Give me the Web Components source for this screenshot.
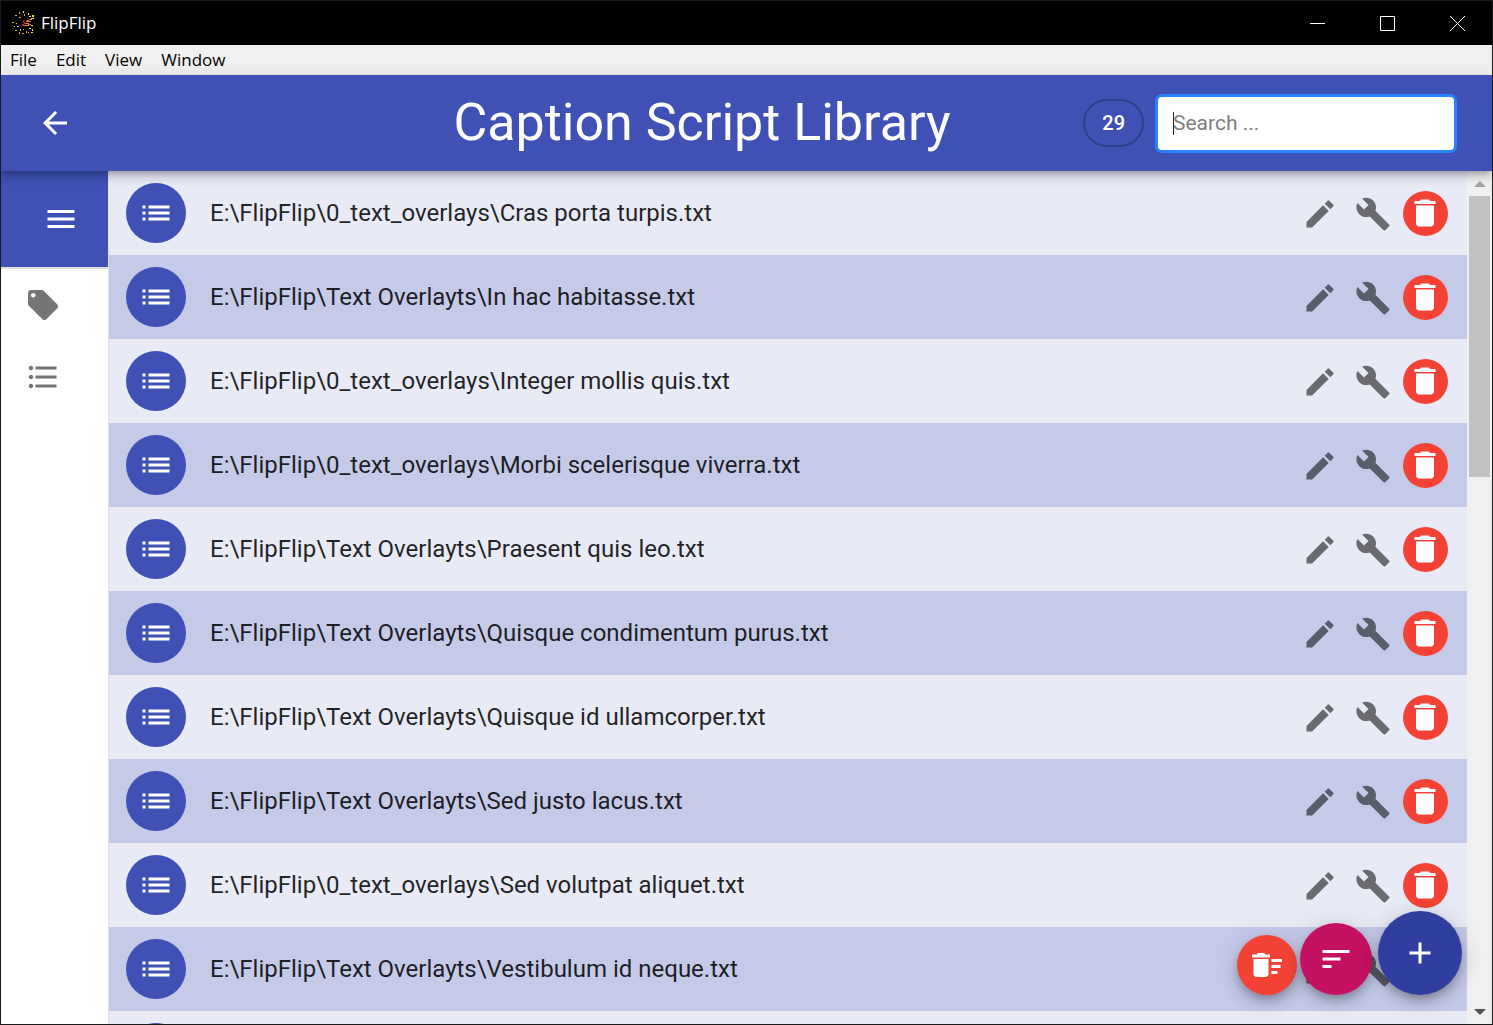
<!DOCTYPE html>
<html lang="en">
<head>
<meta charset="utf-8">
<title>FlipFlip</title>
<style>
html, body { margin: 0; height: 100%; }
body { font-family: Roboto, sans-serif; background: #fff; overflow: hidden; }
</style>
</head>
<body>
<flip-app></flip-app>
<script>
const ICONS = {
  back: 'M20 11H7.83l5.59-5.59L12 4l-8 8 8 8 1.41-1.41L7.83 13H20v-2z',
  menu: 'M3 18h18v-2H3v2zm0-5h18v-2H3v2zm0-7v2h18V6H3z',
  tag: 'M21.41 11.58l-9-9C12.05 2.22 11.55 2 11 2H4c-1.1 0-2 .9-2 2v7c0 .55.22 1.05.59 1.42l9 9c.36.36.86.58 1.41.58.55 0 1.05-.22 1.41-.59l7-7c.37-.36.59-.86.59-1.41 0-.55-.23-1.06-.59-1.42zM5.5 7C4.67 7 4 6.33 4 5.5S4.67 4 5.5 4 7 4.67 7 5.5 6.33 7 5.5 7z',
  bullets: 'M4 10.5c-.83 0-1.5.67-1.5 1.5s.67 1.5 1.5 1.5 1.5-.67 1.5-1.5-.67-1.5-1.5-1.5zm0-6c-.83 0-1.5.67-1.5 1.5S3.17 7.5 4 7.5 5.5 6.83 5.5 6 4.83 4.5 4 4.5zm0 12c-.83 0-1.5.68-1.5 1.5s.68 1.5 1.5 1.5 1.5-.68 1.5-1.5-.67-1.5-1.5-1.5zM7 19h14v-2H7v2zm0-6h14v-2H7v2zm0-8v2h14V5H7z',
  list: 'M3 13h2v-2H3v2zm0 4h2v-2H3v2zm0-8h2V7H3v2zm4 4h14v-2H7v2zm0 4h14v-2H7v2zM7 7v2h14V7H7z',
  edit: 'M3 17.25V21h3.75L17.81 9.94l-3.75-3.75L3 17.25zM20.71 7.04c.39-.39.39-1.02 0-1.41l-2.34-2.34c-.39-.39-1.02-.39-1.41 0l-1.83 1.83 3.75 3.75 1.83-1.83z',
  build: 'M22.7 19l-9.1-9.1c.9-2.3.4-5-1.5-6.9-2-2-5-2.4-7.4-1.3L9 6 6 9 1.6 4.7C.4 7.1.9 10.1 2.9 12.1c1.9 1.9 4.6 2.4 6.9 1.5l9.1 9.1c.4.4 1 .4 1.4 0l2.3-2.3c.5-.4.5-1.1.1-1.4z',
  trash: 'M6 19c0 1.1.9 2 2 2h8c1.1 0 2-.9 2-2V7H6v12zM19 4h-3.5l-1-1h-5l-1 1H5v2h14V4z',
  sweep: 'M15 16h4v2h-4zm0-8h7v2h-7zm0 4h6v2h-6zM3 18c0 1.1.9 2 2 2h6c1.1 0 2-.9 2-2V8H3v10zM14 5h-3l-1-1H6L5 5H2v2h12z',
  sort: 'M3 18h6v-2H3v2zM3 6v2h18V6H3zm0 7h12v-2H3v2z',
  add: 'M19 13h-6v6h-2v-6H5v-2h6V5h2v6h6v2z'
};

class Base extends HTMLElement {
  constructor() {
    super();
    this.attachShadow({ mode: 'open' });
  }
  connectedCallback() {
    this.shadowRoot.innerHTML = '<style>*{box-sizing:border-box}button{font:inherit;border:0;padding:0;margin:0;background:none;color:inherit;cursor:pointer;display:flex;align-items:center;justify-content:center}' + this.css() + '</style>' + this.html();
  }
}

class MdIcon extends Base {
  css() { return ':host{display:block;width:36px;height:36px;flex:none}svg{display:block;width:100%;height:100%;fill:currentColor}'; }
  html() { return `<svg viewBox="0 0 24 24" aria-hidden="true"><path d="${ICONS[this.getAttribute('name')]}"/></svg>`; }
}
customElements.define('md-icon', MdIcon);

class TitleBar extends Base {
  css() { return `
    :host{display:flex;align-items:center;height:44px;background:#000;color:#fff;font:17px/24px "Open Sans","Noto Sans",sans-serif;padding-left:10px}
    .logo{width:24px;height:24px;flex:none}
    .name{flex:1;padding-left:6px}
    .controls{display:flex;gap:1px}
    .controls button{width:69px;height:44px}
    .controls svg{width:15px;height:15px;display:block;fill:none;stroke:#fff}`; }
  html() { return `
    <svg class="logo" viewBox="0 0 24 24" aria-hidden="true" shape-rendering="crispEdges">
      <path fill="#f2e21c" d="M12 0h1v2h-1zM17 2h1v2h-1zM21 4h2v2h-2zM18 5h2v1h-2zM20 7h3v1h-3zM20 14h2v1h-2zM18 17h2v1h-2zM21 18h1v2h-1zM20 21h2v1h-2zM17 21h1v1h-1z"/>
      <path fill="#f0a82a" d="M8 1h1v2H8zM13 3h1v2h-1zM4 4h2v1H4zM8 6h2v1H8zM1 11h2v1H1zM5 12h1v1H5zM3 15h1v1H3zM6 15h2v1H6zM4 19h2v1H4zM9 18h1v2H9zM8 21h1v2H8zM12 18h1v1h-1zM11 22h2v1h-2zM15 20h1v2h-1z"/>
      <path fill="#e87a30" d="M18 8h3v1h-3zM16 9h2v1h-2zM15 10h5v1h-5zM14 12h4v1h-4zM17 13h3v1h-3zM13 14h5v1h-5z"/>
      <path fill="#d81408" d="M12 9h1v3h-1zM13 11h1v2h-1zM11 13h2v2h-2z"/>
    </svg>
    <span class="name">FlipFlip</span>
    <div class="controls">
      <button aria-label="Minimize"><svg viewBox="0 0 15 15"><path d="M0 7.5h15"/></svg></button>
      <button aria-label="Maximize"><svg viewBox="0 0 15 15"><path d="M.5 .5h14v14H.5z"/></svg></button>
      <button aria-label="Close"><svg viewBox="0 0 15 15"><path d="M0 0l15 15M15 0L0 15"/></svg></button>
    </div>`; }
}
customElements.define('title-bar', TitleBar);

class MenuBar extends Base {
  css() { return `
    :host{display:block;background:#f0f0f0;color:#000;font:17px/24px "Open Sans","Noto Sans",sans-serif}
    nav{display:flex;gap:19px;height:30px;padding:0 9px;align-items:center}`; }
  html() { return '<nav><button>File</button><button>Edit</button><button>View</button><button>Window</button></nav>'; }
}
customElements.define('menu-bar', MenuBar);

class SearchBox extends Base {
  css() { return `
    :host{display:flex;align-items:center;width:300px;height:57px;border:2px solid #2684ff;border-radius:6px;box-shadow:0 0 0 1px #2684ff;background:#fff;padding:0 14px 0 15px}
    i{width:1px;height:23px;background:#222;flex:none;margin-right:-1px}
    input{flex:1;min-width:0;border:0;outline:0;padding:0;background:none;font:21px/24px Roboto,sans-serif;color:#333}
    input::placeholder{color:#808080;opacity:1}`; }
  html() { return '<i></i><input type="text" placeholder="Search ..." aria-label="Search">'; }
}
customElements.define('search-box', SearchBox);

class AppHeader extends Base {
  css() { return `
    :host{display:flex;align-items:center;height:96px;padding:0 36px;background:#3f51b5;color:#fff;position:relative;z-index:2;
      box-shadow:0 3px 6px -2px rgba(0,0,0,.2),0 6px 8px 0 rgba(0,0,0,.14),0 2px 15px 0 rgba(0,0,0,.12)}
    .left{flex:0 0 20%}
    .left button{width:72px;height:72px;margin-left:-18px}
    h1{flex:1;margin:0;text-align:center;font-size:52px;line-height:60px;font-weight:400;white-space:nowrap}
    .right{display:flex;align-items:center;gap:12px}
    .chip{height:48px;padding:0 17px;border:2px solid rgba(0,0,0,.23);border-radius:24px;font-size:20px;line-height:44px;font-weight:500}`; }
  html() { return `
    <div class="left"><button aria-label="Back"><md-icon name="back"></md-icon></button></div>
    <h1><slot></slot></h1>
    <div class="right"><span class="chip">${this.getAttribute('count')}</span><search-box></search-box></div>`; }
}
customElements.define('app-header', AppHeader);

class SideDrawer extends Base {
  css() { return `
    :host{display:flex;flex-direction:column;flex:none;width:108px;background:#fff;border-right:1px solid #e0e0e0;color:#757575}
    .head{height:98px;background:#3f51b5;color:#fff;border-bottom:2px solid #e0e0e0;display:flex;align-items:center;justify-content:center;padding-left:13px}
    .item{height:72px;width:100%;justify-content:flex-start;padding-left:24px}`; }
  html() { return `
    <button class="head" aria-label="Toggle drawer"><md-icon name="menu"></md-icon></button>
    <button class="item" aria-label="Tags"><md-icon name="tag"></md-icon></button>
    <button class="item" aria-label="Batch tag"><md-icon name="bullets"></md-icon></button>`; }
}
customElements.define('side-drawer', SideDrawer);

class ScriptRow extends Base {
  css() { return `
    :host{display:flex;align-items:center;flex:none;height:84px;padding:0 19px 0 17px;background:#e8eaf6;color:rgba(0,0,0,.87)}
    :host(:nth-child(even)){background:#c5cae9}
    .avatar{width:60px;height:60px;border-radius:50%;background:#3f51b5;color:#fff;flex:none}
    .path{flex:1;min-width:0;padding-left:24px;font-size:24px;line-height:36px;white-space:nowrap}
    .actions{display:flex;gap:8px;color:rgba(0,0,0,.54)}
    .actions button{width:45px;height:45px;border-radius:50%;padding-top:1px}
    .actions .del{background:#f44336;color:#fff;padding:0 1px 1px 0}`; }
  html() { return `
    <button class="avatar" aria-label="Select script"><md-icon name="list"></md-icon></button>
    <span class="path"><slot></slot></span>
    <div class="actions">
      <button aria-label="Edit"><md-icon name="edit"></md-icon></button>
      <button aria-label="Options"><md-icon name="build"></md-icon></button>
      <button class="del" aria-label="Delete"><md-icon name="trash"></md-icon></button>
    </div>`; }
}
customElements.define('script-row', ScriptRow);

class ScrollTrack extends Base {
  css() { return `
    :host{display:flex;flex-direction:column;align-items:center;flex:none;width:25px;background:#f0f0f0}
    svg{width:25px;height:25px;flex:none;display:block}
    .rail{flex:1;width:21px}
    .thumb{height:35%;background:#c1c1c1}`; }
  html() { return `
    <svg viewBox="0 0 25 25" aria-hidden="true"><path fill="#a3a3a3" d="M7 16l6-6 6 6z"/></svg>
    <div class="rail"><div class="thumb"></div></div>
    <svg viewBox="0 0 25 25" aria-hidden="true"><path fill="#505050" d="M7 10h12l-6 6z"/></svg>`; }
}
customElements.define('scroll-track', ScrollTrack);

class FabGroup extends Base {
  css() { return `
    :host{display:flex;align-items:flex-end;position:absolute;right:30px;bottom:29px;z-index:1;color:#fff}
    button{border-radius:50%;box-shadow:0 5px 8px -2px rgba(0,0,0,.2),0 9px 15px 0 rgba(0,0,0,.14),0 2px 27px 0 rgba(0,0,0,.12)}
    .sweep{width:60px;height:60px;background:#f44336;margin-right:3px}
    .sort{width:72px;height:72px;background:#c51162;margin-right:6px}
    .add{width:84px;height:84px;background:#303f9f}`; }
  html() { return `
    <button class="sweep" aria-label="Delete all"><md-icon name="sweep"></md-icon></button>
    <button class="sort" aria-label="Sort"><md-icon name="sort"></md-icon></button>
    <button class="add" aria-label="Add script"><md-icon name="add"></md-icon></button>`; }
}
customElements.define('fab-group', FabGroup);

const PATHS = [
  'E:\\FlipFlip\\0_text_overlays\\Cras porta turpis.txt',
  'E:\\FlipFlip\\Text Overlayts\\In hac habitasse.txt',
  'E:\\FlipFlip\\0_text_overlays\\Integer mollis quis.txt',
  'E:\\FlipFlip\\0_text_overlays\\Morbi scelerisque viverra.txt',
  'E:\\FlipFlip\\Text Overlayts\\Praesent quis leo.txt',
  'E:\\FlipFlip\\Text Overlayts\\Quisque condimentum purus.txt',
  'E:\\FlipFlip\\Text Overlayts\\Quisque id ullamcorper.txt',
  'E:\\FlipFlip\\Text Overlayts\\Sed justo lacus.txt',
  'E:\\FlipFlip\\0_text_overlays\\Sed volutpat aliquet.txt',
  'E:\\FlipFlip\\Text Overlayts\\Vestibulum id neque.txt',
  ''
];

class FlipApp extends Base {
  css() { return `
    :host{display:flex;flex-direction:column;height:100vh;box-sizing:border-box;border:1px solid #1a1a1a;position:relative;overflow:hidden}
    title-bar,menu-bar,app-header{flex:none}
    main{flex:1;min-height:0;display:flex}
    .rows{flex:1;min-width:0;display:flex;flex-direction:column;overflow:hidden}`; }
  html() { return `
    <title-bar></title-bar>
    <menu-bar></menu-bar>
    <app-header count="29">Caption Script Library</app-header>
    <main>
      <side-drawer></side-drawer>
      <div class="rows">${PATHS.map(p => `<script-row>${p}</script-row>`).join('')}</div>
      <scroll-track></scroll-track>
    </main>
    <fab-group></fab-group>`; }
}
customElements.define('flip-app', FlipApp);
</script>
</body>
</html>
